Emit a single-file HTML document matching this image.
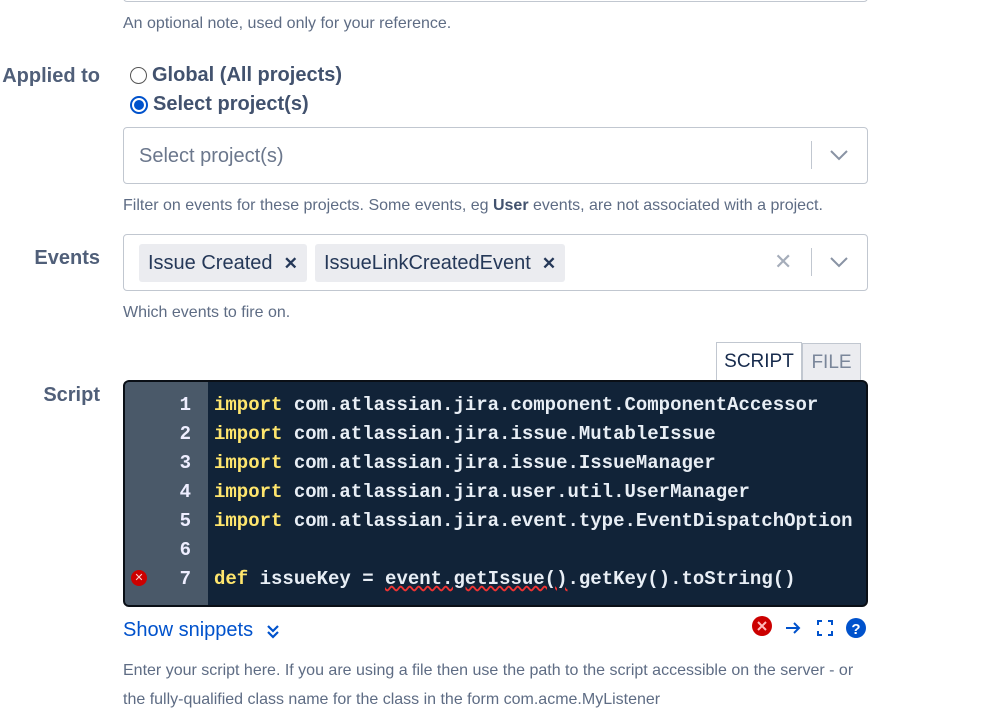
<!DOCTYPE html>
<html><head><style>
body{margin:0;width:999px;height:709px;background:#fff;font-family:"Liberation Sans",sans-serif;color:#172b4d;position:relative;overflow:hidden}
.a{position:absolute}
.help{font-size:16px;color:#5e6c84}
.lbl{font-size:20px;color:#505f79;text-align:right;width:100px;left:0;font-weight:bold;-webkit-text-stroke:0}
.box{border:1px solid #c1c7d0;border-radius:4px;background:#fff}
.tag{background:#ebecf0;border-radius:3px;font-size:20px;color:#253858;height:38px;line-height:38px;padding:0 9px}
.code{font-family:"Liberation Mono",monospace;font-size:19px;line-height:29px;white-space:pre;font-weight:bold}
</style></head><body>
<div class="a box" style="left:123px;top:-20px;width:743px;height:20px"></div>
<div class="a help" style="left:123px;top:15px">An optional note, used only for your reference.</div>
<div class="a lbl" style="top:65px">Applied to</div>
<div class="a" style="left:130px;top:64px;font-size:20px;color:#42526e;font-weight:bold">
<div style="display:flex;align-items:center;gap:5px"><span style="width:15px;height:15px;border:1.5px solid #555;border-radius:50%;display:inline-block"></span>Global (All projects)</div>
<div style="display:flex;align-items:center;gap:5px;margin-top:6px"><span style="width:14px;height:14px;border:2px solid #0052cc;border-radius:50%;display:inline-block;position:relative"><span style="position:absolute;left:2px;top:2px;width:10px;height:10px;border-radius:50%;background:#0052cc"></span></span>Select project(s)</div>
</div>
<div class="a box" style="left:123px;top:127px;width:743px;height:55px"></div>
<div class="a" style="left:139px;top:145px;font-size:20px;color:#6b778c">Select project(s)</div>
<div class="a" style="left:811px;top:141px;width:1px;height:28px;background:#c1c7d0"></div>
<svg class="a" style="left:829px;top:148px" width="20" height="14"><path d="M2 3l8 8 8-8" stroke="#8993a4" stroke-width="2" fill="none"/></svg>
<div class="a help" style="left:123px;top:197px">Filter on events for these projects. Some events, eg <b style="color:#42526e">User</b> events, are not associated with a project.</div>
<div class="a lbl" style="top:247px">Events</div>
<div class="a box" style="left:123px;top:234px;width:743px;height:55px"></div>
<div class="a tag" style="left:139px;top:244px">Issue Created &nbsp;<b style="font-size:17px">✕</b></div>
<div class="a tag" style="left:315px;top:244px">IssueLinkCreatedEvent &nbsp;<b style="font-size:17px">✕</b></div>
<div class="a" style="left:774px;top:249px;font-size:22px;color:#a5adba">✕</div>
<div class="a" style="left:811px;top:248px;width:1px;height:28px;background:#c1c7d0"></div>
<svg class="a" style="left:829px;top:255px" width="20" height="14"><path d="M2 3l8 8 8-8" stroke="#8993a4" stroke-width="2" fill="none"/></svg>
<div class="a help" style="left:123px;top:304px">Which events to fire on.</div>
<div class="a" style="left:716px;top:342px;width:84px;height:37px;border:1px solid #c1c7d0;border-bottom:none;font-size:19px;line-height:38px;text-align:center;color:#172b4d">SCRIPT</div>
<div class="a" style="left:802px;top:343px;width:57px;height:37px;background:#ebecf0;border:1px solid #c1c7d0;border-bottom:none;font-size:19px;line-height:38px;text-align:center;color:#7a869a">FILE</div>
<div class="a lbl" style="top:384px">Script</div>
<div class="a" style="left:123px;top:380px;width:741px;height:223px;background:#112338;border:2px solid #0a0f16;border-radius:6px;overflow:hidden">
<div class="a" style="left:0;top:0;width:83px;height:223px;background:#4a5969"></div>
<div class="a code" style="left:0;top:9px;width:66px;text-align:right;color:#eef">1
2
3
4
5
6
7</div>
<div class="a" style="left:6px;top:188px;width:16px;height:16px;border-radius:50%;background:#c00;color:#fcc;font-size:11px;line-height:16px;text-align:center">✕</div>
<div class="a code" style="left:89px;top:9px;color:#e8eef5"><span style="color:#ffe66d">import</span> com.atlassian.jira.component.ComponentAccessor
<span style="color:#ffe66d">import</span> com.atlassian.jira.issue.MutableIssue
<span style="color:#ffe66d">import</span> com.atlassian.jira.issue.IssueManager
<span style="color:#ffe66d">import</span> com.atlassian.jira.user.util.UserManager
<span style="color:#ffe66d">import</span> com.atlassian.jira.event.type.EventDispatchOption

<span style="color:#ffe66d">def</span> issueKey = <span style="text-decoration:underline wavy #e33">event.getIssue()</span>.getKey().toString()</div>
</div>
<div class="a" style="left:123px;top:619px;font-size:20px;color:#0052cc">Show snippets</div>
<svg class="a" style="left:265px;top:622px" width="16" height="18"><path d="M3 4l5 5 5-5M3 10l5 5 5-5" stroke="#0052cc" stroke-width="2.2" fill="none"/></svg>
<svg class="a" style="left:752px;top:615px" width="120" height="26">
<circle cx="10" cy="11" r="10" fill="#c00"/><path d="M6 7l8 8M14 7l-8 8" stroke="#fbb" stroke-width="2"/>
<path d="M34 13h13M42 8l5 5-5 5" stroke="#0052cc" stroke-width="2" fill="none"/>
<path d="M66 10V6h4M76 6h4v4M80 16v4h-4M70 20h-4v-4" stroke="#0052cc" stroke-width="2" fill="none"/>
<circle cx="104" cy="13" r="10" fill="#0052cc"/><text x="104" y="19" font-size="15" font-weight="bold" fill="#fff" text-anchor="middle" font-family="Liberation Sans">?</text>
</svg>
<div class="a help" style="left:123px;top:656px;line-height:29px;width:750px">Enter your script here. If you are using a file then use the path to the script accessible on the server - or the fully-qualified class name for the class in the form com.acme.MyListener</div>
</body></html>
